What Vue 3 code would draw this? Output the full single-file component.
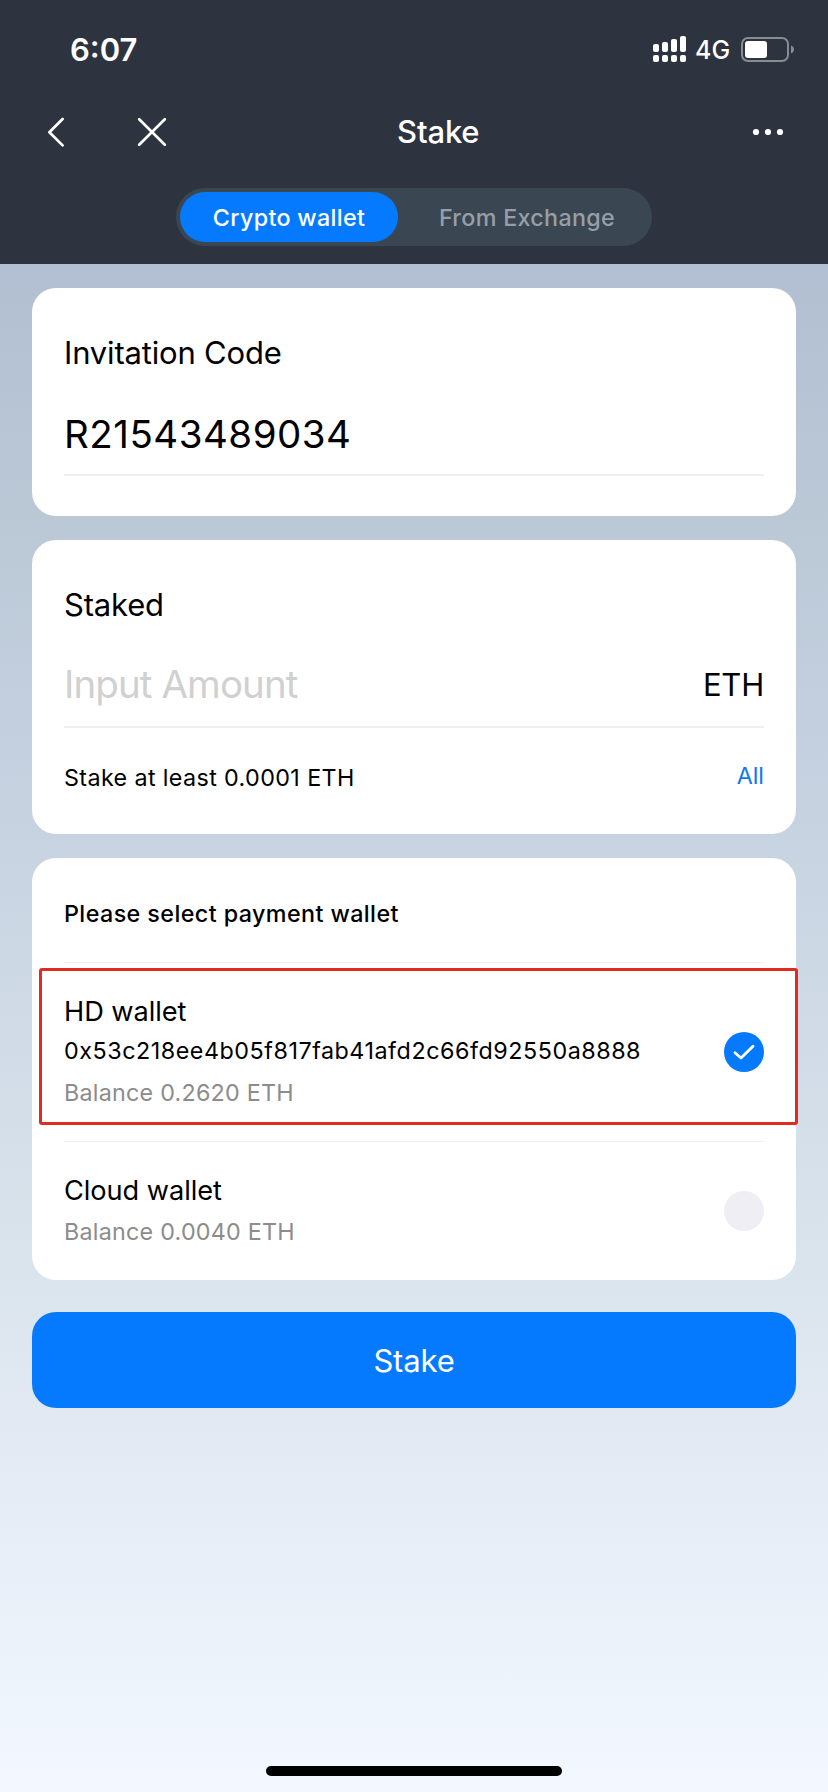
<script setup>
import { ref } from 'vue'

const tabs = ['Crypto wallet', 'From Exchange']
const activeTab = ref(0)
const amount = ref('')
const selected = ref('hd')
const wallets = [
  { id: 'hd', name: 'HD wallet', address: '0x53c218ee4b05f817fab41afd2c66fd92550a8888', balance: 'Balance 0.2620 ETH', highlight: true },
  { id: 'cloud', name: 'Cloud wallet', address: '', balance: 'Balance 0.0040 ETH', highlight: false },
]
</script>

<template>
  <div class="screen">
    <header class="top">
      <div class="status">
        <span class="time">6:07</span>
        <div class="indicators">
          <svg class="signal" width="33" height="28" viewBox="0 0 33 28" fill="#fff">
            <rect x="0" y="8" width="6" height="8" rx="2" />
            <rect x="9" y="6" width="6" height="10" rx="2" />
            <rect x="18" y="3" width="6" height="13" rx="2" />
            <rect x="27" y="0" width="6" height="16" rx="2" />
            <rect x="0" y="19" width="6" height="7" rx="2" />
            <rect x="9" y="19" width="6" height="7" rx="2" />
            <rect x="18" y="19" width="6" height="7" rx="2" />
            <rect x="27" y="19" width="6" height="7" rx="2" />
          </svg>
          <span class="network">4G</span>
          <svg class="battery" width="54" height="26" viewBox="0 0 54 26">
            <rect x="1" y="1" width="46" height="23" rx="6" fill="none" stroke="#888c93" stroke-width="2" />
            <rect x="4" y="4" width="22" height="17" rx="3" fill="#fff" />
            <path d="M50 8.5C52 9.2 53 10.8 53 12.5S52 15.8 50 16.5Z" fill="#888c93" />
          </svg>
        </div>
      </div>
      <nav class="nav">
        <div class="nav-left">
          <svg width="18" height="30" viewBox="0 0 18 30" fill="none" stroke="#fff" stroke-width="2.7" stroke-linecap="round" stroke-linejoin="round">
            <path d="M15.6 2 2.4 15.2 15.6 28.4" />
          </svg>
          <svg class="close" width="30" height="30" viewBox="0 0 30 30" fill="none" stroke="#fff" stroke-width="2.7" stroke-linecap="round">
            <path d="M2.2 2.2 27.8 27.8M27.8 2.2 2.2 27.8" />
          </svg>
        </div>
        <h1 class="title">Stake</h1>
        <svg class="more" width="32" height="8" viewBox="0 0 32 8" fill="#fff">
          <circle cx="4" cy="4" r="3.1" />
          <circle cx="16" cy="4" r="3.1" />
          <circle cx="28" cy="4" r="3.1" />
        </svg>
      </nav>
      <div class="segment">
        <button v-for="(tab, i) in tabs" :key="tab" class="tab" :class="{ active: activeTab === i }" @click="activeTab = i">{{ tab }}</button>
      </div>
    </header>

    <main class="content">
      <section class="card">
        <h2 class="label">Invitation Code</h2>
        <div class="field"><span class="code">R21543489034</span></div>
      </section>

      <section class="card staked">
        <h2 class="label">Staked</h2>
        <div class="field">
          <input v-model="amount" class="amount" placeholder="Input Amount" />
          <span class="unit">ETH</span>
        </div>
        <div class="hint">
          <span class="minimum">Stake at least 0.0001 ETH</span>
          <a class="all">All</a>
        </div>
      </section>

      <section class="card wallets">
        <h2 class="prompt">Please select payment wallet</h2>
        <div v-for="w in wallets" :key="w.id" class="wallet" :class="w.id" @click="selected = w.id">
          <div>
            <div class="name">{{ w.name }}</div>
            <div v-if="w.address" class="address">{{ w.address }}</div>
            <div class="balance">{{ w.balance }}</div>
          </div>
          <span class="radio" :class="{ on: selected === w.id }">
            <svg v-if="selected === w.id" width="40" height="40" viewBox="0 0 40 40" fill="none" stroke="#fff" stroke-width="2.8" stroke-linecap="round" stroke-linejoin="round">
              <path d="M11 20.7 17 26 29 14.3" />
            </svg>
          </span>
          <span v-if="w.highlight" class="outline"></span>
        </div>
      </section>

      <button class="submit">Stake</button>
    </main>
    <div class="home"></div>
  </div>
</template>

<style>
body {
  margin: 0;
}
</style>

<style scoped>
.screen {
  width: 828px;
  height: 1792px;
  box-sizing: border-box;
  display: flex;
  flex-direction: column;
  overflow: hidden;
  color: #000;
  font-family: Inter, "Liberation Sans", sans-serif;
  background: linear-gradient(#b2bfd2 264px, #bac8d6 510px, #c8d3e2 835px, #dbe5ed 1290px, #e2e9f3 1420px, #f3f8ff 1792px);
}
button {
  border: 0;
  padding: 0;
  font-family: inherit;
}
h1, h2 {
  margin: 0;
  font-weight: 400;
}
.top {
  height: 264px;
  background: #2e343f;
  color: #fff;
}
.status {
  height: 88px;
  padding: 12px 33px 0 70px;
  box-sizing: border-box;
  display: flex;
  justify-content: space-between;
  align-items: center;
}
.time {
  font-size: 31px;
  font-weight: 600;
  line-height: 40px;
}
.indicators {
  display: flex;
  align-items: center;
}
.signal {
  margin-top: -1px;
}
.network {
  width: 35px;
  margin: 0 11px 0 9px;
  font-size: 25px;
  font-weight: 500;
}
.nav {
  height: 88px;
  padding: 0 44px 0 47px;
  display: grid;
  grid-template-columns: 350px auto 1fr;
  align-items: center;
}
.nav-left {
  display: flex;
  gap: 72px;
}
.title {
  padding-bottom: 1px;
  font-size: 31px;
  font-weight: 500;
  line-height: 40px;
  letter-spacing: -0.15px;
}
.more {
  justify-self: end;
}
.segment {
  width: 476px;
  height: 58px;
  margin: 12px auto 0;
  padding: 4px;
  box-sizing: border-box;
  display: flex;
  border-radius: 29px;
  background: #3a4752;
}
.tab {
  flex: 1;
  height: 50px;
  padding-left: 8px;
  border-radius: 25px;
  background: none;
  color: #969fa8;
  font-size: 23.3px;
  font-weight: 500;
  letter-spacing: 0.32px;
}
.tab.active {
  flex: 0 0 218px;
  padding-left: 0;
  background: #057aff;
  color: #fff;
}
.content {
  flex: 1;
  padding: 24px 32px 0;
}
.card {
  margin-bottom: 24px;
  padding: 45px 32px 40px;
  border-radius: 24px;
  background: #fff;
}
.label {
  font-size: 31px;
  line-height: 40px;
  letter-spacing: -0.18px;
}
.field {
  height: 82px;
  margin-top: 19px;
  display: flex;
  align-items: center;
  justify-content: space-between;
  border-bottom: 2px solid #efefef;
}
.code {
  padding-top: 2px;
  font-size: 38.5px;
  letter-spacing: 0.5px;
}
.amount {
  width: 400px;
  height: 80px;
  padding: 0 0 2px;
  box-sizing: border-box;
  border: 0;
  outline: 0;
  background: none;
  font-family: inherit;
  font-size: 38.5px;
  letter-spacing: -0.9px;
}
.amount::placeholder {
  color: #d0d0d0;
  opacity: 1;
}
.unit {
  padding-bottom: 2px;
  font-size: 31px;
  letter-spacing: -0.2px;
}
.staked {
  padding-bottom: 8px;
}
.hint {
  height: 98px;
  display: flex;
  align-items: center;
  justify-content: space-between;
  font-size: 23.3px;
  letter-spacing: 0.38px;
}
.all {
  margin-bottom: 4px;
  color: #1178ec;
  letter-spacing: 0;
}
.wallets {
  padding-top: 0;
  padding-bottom: 0;
  margin-bottom: 32px;
}
.prompt {
  height: 104px;
  box-sizing: border-box;
  padding-top: 7px;
  font-size: 23.3px;
  font-weight: 500;
  line-height: 97px;
  letter-spacing: 0.42px;
}
.wallet {
  position: relative;
  height: 139px;
  padding-top: 28px;
  box-sizing: border-box;
  border-top: 1px solid #efeff2;
  display: flex;
  justify-content: space-between;
}
.wallet.hd {
  height: 179px;
}
.name {
  padding-top: 1px;
  font-size: 27.2px;
  line-height: 40px;
  letter-spacing: -0.05px;
}
.address {
  font-size: 23.3px;
  line-height: 38px;
  letter-spacing: 0.54px;
}
.balance {
  color: #8c8c8c;
  font-size: 23.3px;
  line-height: 45px;
  letter-spacing: 0.24px;
}
.cloud .balance {
  line-height: 41px;
}
.radio {
  width: 40px;
  height: 40px;
  margin-top: 21px;
  border-radius: 50%;
  background: #eeeef4;
}
.radio.on {
  margin-top: 41px;
  background: #057aff;
}
.radio svg {
  display: block;
}
.outline {
  position: absolute;
  left: -25px;
  top: 5px;
  width: 759px;
  height: 157px;
  box-sizing: border-box;
  border: 3px solid #e12a20;
  border-radius: 3px;
}
.submit {
  width: 100%;
  height: 96px;
  border-radius: 24px;
  background: #057aff;
  color: #fff;
  font-size: 31px;
  letter-spacing: -0.15px;
}
.home {
  width: 296px;
  height: 10px;
  margin: 0 auto 16px;
  border-radius: 5px;
  background: #000;
}
</style>
